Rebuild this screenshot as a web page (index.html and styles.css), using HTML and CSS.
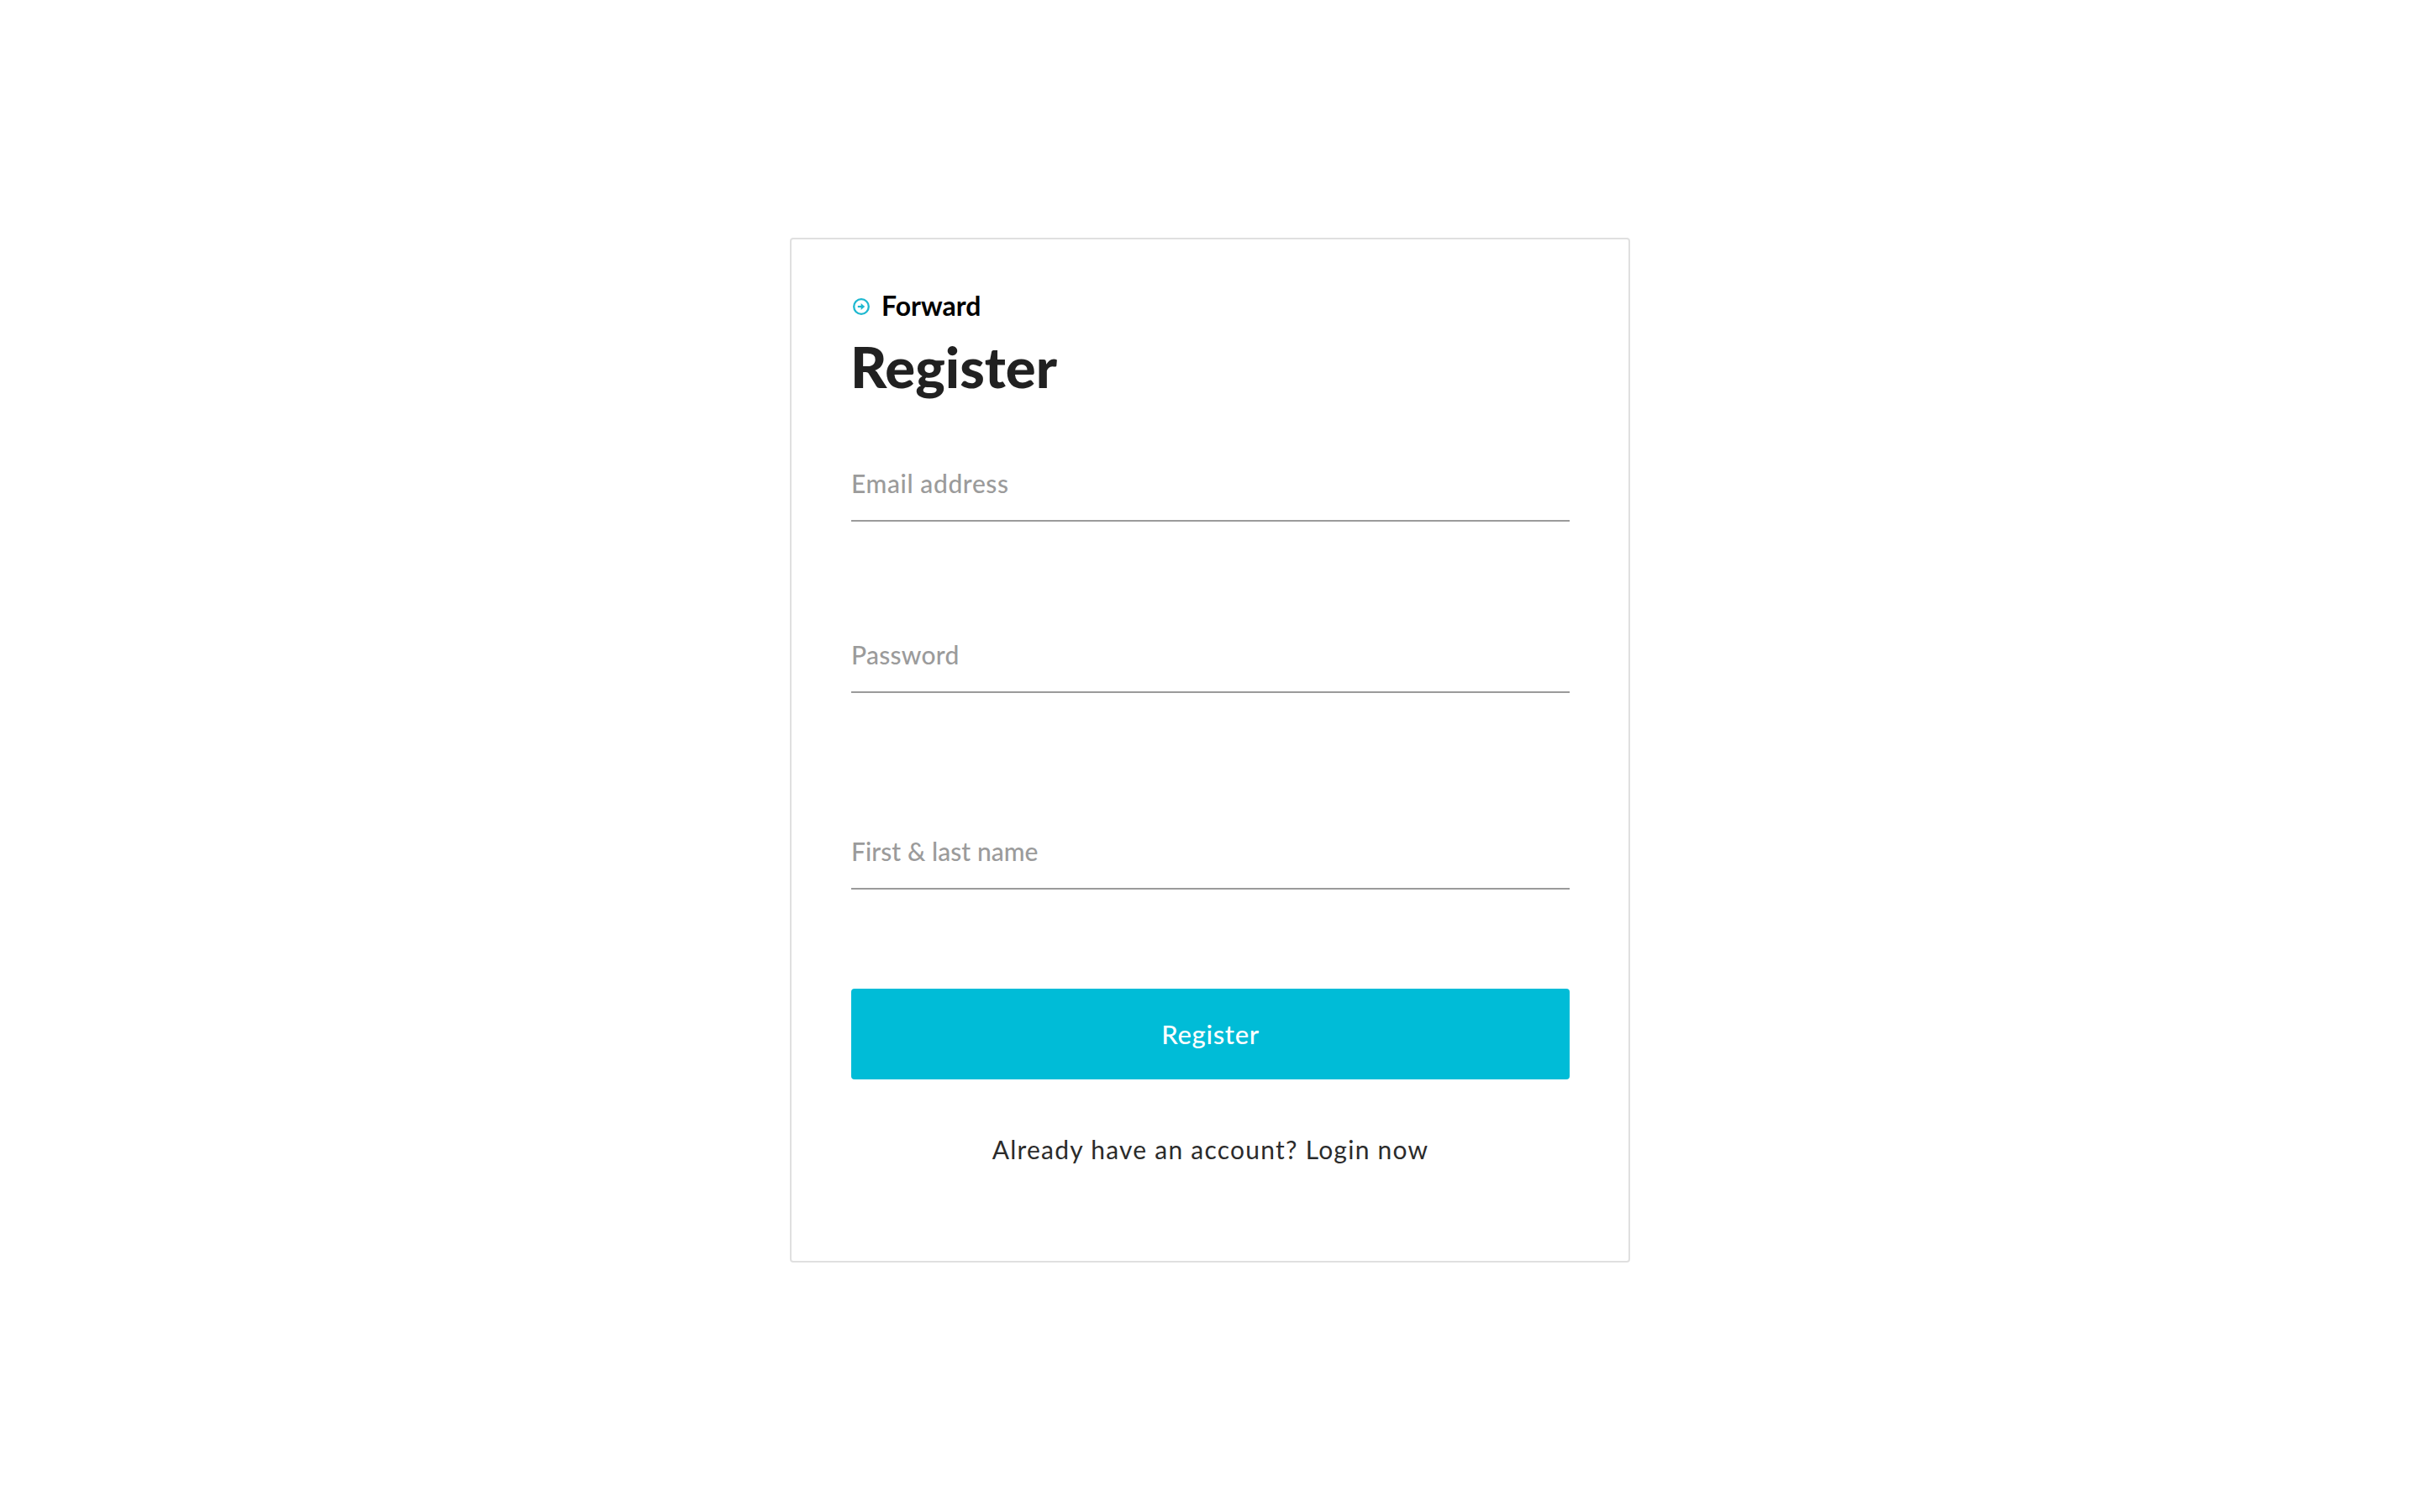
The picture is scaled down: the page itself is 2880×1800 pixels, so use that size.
FILE: index.html
```html
<!DOCTYPE html>
<html lang="en">
<head>
    <meta charset="UTF-8">
    <meta name="viewport" content="width=device-width, initial-scale=1.0">
    <title>Register</title>
    <link rel="stylesheet" href="styles.css">
</head>
<body>
    <div class="card">
        <div class="logo">
            <svg class="logo-icon" viewBox="0 0 20 20" aria-hidden="true">
                <circle cx="10" cy="10" r="8.8" fill="none" stroke="#1eb8d0" stroke-width="2.3"/>
                <path d="M5.8 10h5" fill="none" stroke="#1eb8d0" stroke-width="2.2"/>
                <path d="M9.6 6 14.2 10 9.6 14z" fill="#1eb8d0"/>
            </svg>
            <span class="logo-text">Forward</span>
        </div>
        <h1 class="title">Register</h1>
        <form class="form">
            <div class="field field-email">
                <input type="email" id="email">
                <label for="email">Email address</label>
            </div>
            <div class="field field-password">
                <input type="password" id="password">
                <label for="password">Password</label>
            </div>
            <div class="field field-name">
                <input type="text" id="name">
                <label for="name">First &amp; last name</label>
            </div>
            <button type="button" class="submit">Register</button>
        </form>
        <p class="login-link">Already have an account? Login now</p>
    </div>
</body>
</html>
```

FILE: styles.css
```css
* {
    box-sizing: border-box;
}
body {
    margin: 0;
    height: 1800px;
    padding-top: 283px;
    display: flex;
    justify-content: center;
    align-items: flex-start;
    background: #fff;
    font-family: "Lato", sans-serif;
    overflow: hidden;
}
.card {
    width: 1000px;
    height: 1220px;
    padding: 60px 70px 0 71px;
    border: 2px solid #e0e0e0;
    border-radius: 4px;
}
.logo {
    display: flex;
    align-items: center;
    gap: 14px;
    height: 40px;
    padding-left: 2px;
}
.logo-icon {
    width: 20px;
    height: 20px;
}
.logo-text {
    margin-bottom: 4px;
    font-size: 32px;
    font-weight: 700;
    color: #000;
}
.title {
    margin: 11px 0 0 -1px;
    font-size: 67px;
    line-height: 80px;
    font-weight: 900;
    color: #212121;
}
.form {
    display: flex;
    flex-direction: column;
}
.field {
    display: grid;
    height: 64px;
    border-bottom: 2px solid #9b9b9b;
}
.field input,
.field label {
    grid-area: 1 / 1;
}
.field input {
    border: none;
    outline: none;
    background: transparent;
}
.field label {
    font-size: 30px;
    font-weight: 500;
    line-height: 37px;
    color: #9b9b9b;
    pointer-events: none;
}
.field-email {
    margin: 81px 0 140px;
}
.field-email label {
    letter-spacing: 0.6px;
}
.field-password {
    margin-bottom: 170px;
}
.field-password label {
    letter-spacing: 0.25px;
}
.field-name {
    margin-bottom: 118px;
}
.field-name label {
    letter-spacing: 0.05px;
}
.submit {
    height: 108px;
    border: none;
    border-radius: 4px;
    background: #00bcd7;
    color: #fff;
    font-family: inherit;
    font-size: 31px;
    font-weight: 500;
    letter-spacing: 0.7px;
    cursor: pointer;
}
.login-link {
    margin: 63px 0 0;
    font-size: 30px;
    line-height: 40px;
    letter-spacing: 1.24px;
    text-align: center;
    color: #2b2b2b;
}
```
